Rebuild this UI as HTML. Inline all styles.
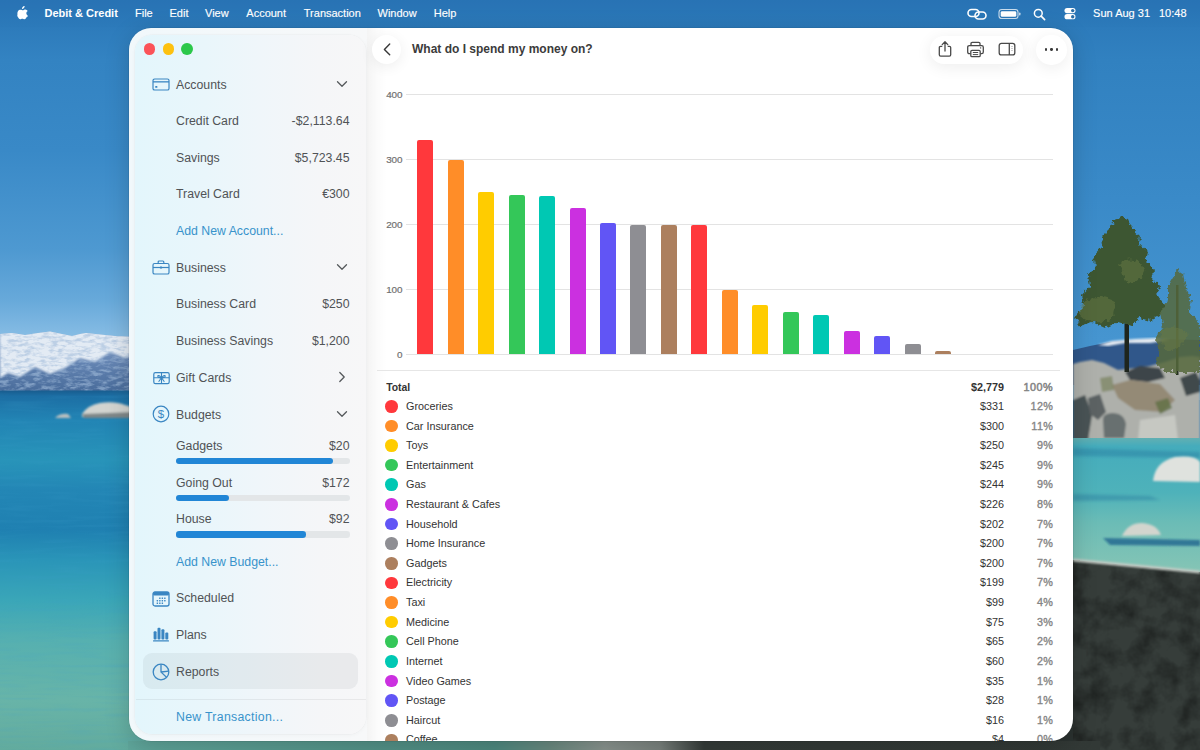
<!DOCTYPE html>
<html><head><meta charset="utf-8">
<style>
*{margin:0;padding:0;box-sizing:border-box}
html,body{width:1200px;height:750px;overflow:hidden;background:#2a77b6}
body{position:relative;font-family:"Liberation Sans",sans-serif}
#bg{position:absolute;left:0;top:0;width:1200px;height:750px;overflow:hidden}
#bg .scene{position:absolute;left:0;top:0}
#menubar{position:absolute;left:0;top:0;width:1200px;height:27px;background:rgba(40,115,180,0.12)}
.t{position:absolute;white-space:nowrap}
#win{position:absolute;left:128.5px;top:28px;width:944.5px;height:713px;border-radius:22px;background:linear-gradient(90deg,#f1f8fb 0,#f4f8fa 120px,#f7f8f9 238px,#fff 238px);overflow:hidden;box-shadow:0 0 0 0.5px rgba(0,0,0,0.12),0 6px 24px rgba(0,0,0,0.18)}
#sidebar{position:absolute;left:6px;top:6.5px;width:231.5px;height:699.5px;border-radius:17px;background:linear-gradient(90deg,#e3f6fc 0%,#e9f6fb 30%,#f0f6fa 55%,#f5f6f8 80%,#f7f7f8 100%);box-shadow:0 0 0 0.5px rgba(0,0,0,0.03),0 1px 4px rgba(0,0,0,0.035)}
.tl{position:absolute;width:11.8px;height:11.8px;border-radius:50%}
</style></head><body>

<div id="bg">
  <svg class="scene" width="1200" height="750" viewBox="0 0 1200 750">
    <defs>
      <linearGradient id="sky" x1="0" y1="0" x2="0" y2="400" gradientUnits="userSpaceOnUse">
        <stop offset="0.0000" stop-color="#2873b4"/>
        <stop offset="0.0675" stop-color="#2d7bbb"/>
        <stop offset="0.1500" stop-color="#3383c2"/>
        <stop offset="0.3750" stop-color="#3989c7"/>
        <stop offset="0.6250" stop-color="#4e99d1"/>
        <stop offset="0.7500" stop-color="#67a9da"/>
        <stop offset="0.8400" stop-color="#86bce4"/>
        <stop offset="1.0000" stop-color="#8cc0e6"/>
      </linearGradient>
      <linearGradient id="skyR" x1="0" y1="0" x2="0" y2="400" gradientUnits="userSpaceOnUse">
        <stop offset="0" stop-color="#2873b4"/>
        <stop offset="0.0675" stop-color="#2d7bbb"/>
        <stop offset="0.15" stop-color="#3181c0"/>
        <stop offset="0.5" stop-color="#3a8ac8"/>
        <stop offset="0.85" stop-color="#4695d0"/>
        <stop offset="1" stop-color="#4a98d2"/>
      </linearGradient>
      <linearGradient id="lakeL" x1="0" y1="390" x2="0" y2="750" gradientUnits="userSpaceOnUse">
        <stop offset="0.0000" stop-color="#185a8c"/>
        <stop offset="0.0167" stop-color="#1c6ea4"/>
        <stop offset="0.0833" stop-color="#2284b4"/>
        <stop offset="0.1944" stop-color="#2894b9"/>
        <stop offset="0.2778" stop-color="#2386b5"/>
        <stop offset="0.3889" stop-color="#1f80b1"/>
        <stop offset="0.4722" stop-color="#2a95b8"/>
        <stop offset="0.5833" stop-color="#3aa6b8"/>
        <stop offset="0.6944" stop-color="#56b0b0"/>
        <stop offset="0.8611" stop-color="#68b4a8"/>
        <stop offset="1.0000" stop-color="#62ab9e"/>
      </linearGradient>
      <linearGradient id="mtnBase" x1="0" y1="330" x2="0" y2="391" gradientUnits="userSpaceOnUse">
        <stop offset="0" stop-color="#9fb8d8"/>
        <stop offset="0.5" stop-color="#6686b4"/>
        <stop offset="1" stop-color="#496c9b"/>
      </linearGradient>
      <linearGradient id="lakeR" x1="0" y1="0" x2="0" y2="1">
        <stop offset="0" stop-color="#62afb2"/>
        <stop offset="0.06" stop-color="#45acbc"/>
        <stop offset="0.4" stop-color="#4eb2ba"/>
        <stop offset="0.62" stop-color="#6bbcb6"/>
        <stop offset="1" stop-color="#86c5b5"/>
      </linearGradient>
      <filter id="grain" x="0" y="0" width="100%" height="100%">
        <feTurbulence type="fractalNoise" baseFrequency="0.045" numOctaves="4" seed="4"/>
        <feColorMatrix type="matrix" values="0 0 0 0 0  0 0 0 0 0  0 0 0 0 0  0 0 0 -2.4 1.45"/>
        <feComposite in2="SourceGraphic" operator="in"/>
      </filter>
      <filter id="streak" x="0" y="0" width="100%" height="100%">
        <feTurbulence type="fractalNoise" baseFrequency="0.02 0.25" numOctaves="2" seed="7"/>
        <feColorMatrix type="matrix" values="0 0 0 0 0.05  0 0 0 0 0.35  0 0 0 0 0.6  0 0 0 -2.2 1.2"/>
        <feComposite in2="SourceGraphic" operator="in"/>
      </filter>
      <linearGradient id="strip" x1="0" y1="0" x2="1100" y2="0" gradientUnits="userSpaceOnUse">
        <stop offset="0.12" stop-color="#5fa69b"/>
        <stop offset="0.45" stop-color="#4e8a80"/>
        <stop offset="0.5" stop-color="#6a8a80"/>
        <stop offset="0.55" stop-color="#8a948f"/>
        <stop offset="0.6" stop-color="#7a827e"/>
        <stop offset="0.64" stop-color="#353c39"/>
        <stop offset="1" stop-color="#323936"/>
      </linearGradient>
      <filter id="speck" x="0" y="0" width="100%" height="100%">
        <feTurbulence type="fractalNoise" baseFrequency="0.12 0.3" numOctaves="3" seed="11"/>
        <feColorMatrix type="matrix" values="0 0 0 0 0.36  0 0 0 0 0.50  0 0 0 0 0.70  0 0 0 -3.2 1.85"/>
        <feComposite in2="SourceGraphic" operator="in"/>
      </filter>
      <filter id="foliage" x="-10%" y="-10%" width="120%" height="120%">
        <feTurbulence type="fractalNoise" baseFrequency="0.25" numOctaves="2" seed="3" result="n"/>
        <feDisplacementMap in="SourceGraphic" in2="n" scale="7" xChannelSelector="R" yChannelSelector="G" result="d"/>
        <feGaussianBlur in="d" stdDeviation="0.5"/>
      </filter>
      <filter id="blur1"><feGaussianBlur stdDeviation="0.8"/></filter>
      <filter id="blur2"><feGaussianBlur stdDeviation="1.5"/></filter>
    </defs>
    <rect x="0" y="0" width="640" height="400" fill="url(#sky)"/>
    <rect x="640" y="0" width="560" height="400" fill="url(#skyR)"/>
    <!-- left mountains -->
    <clipPath id="mclip"><path d="M0 334 L12 333 L25 335 L38 333 L50 331.5 L62 334 L72 336 L80 334 L86 333 L100 334.5 L115 336 L135 337 L160 338 L160 391 L0 391 Z"/></clipPath>
    <g clip-path="url(#mclip)">
      <rect x="0" y="330" width="160" height="61" fill="url(#mtnBase)"/>
      <path d="M0 330 L160 330 L160 356 L140 354 L125 358 L110 352 L95 362 L80 358 L65 368 L50 374 L35 367 L20 377 L8 373 L0 378 Z" fill="#e3ebf4" filter="url(#blur1)"/>
      <rect x="0" y="330" width="160" height="61" fill="#5f82b0" filter="url(#speck)" opacity="0.6"/>
    </g>
    <!-- left lake -->
    <rect x="0" y="390.5" width="640" height="360" fill="url(#lakeL)"/>
    <rect x="0" y="390.5" width="640" height="360" fill="#000" filter="url(#streak)" opacity="0.18"/>
    <!-- left rocks -->
    <g filter="url(#blur1)">
      <path d="M82 414 Q88 405 100 403 Q115 401 125 405 L135 408 L135 417 L82 417 Z" fill="#d2d4d0"/>
      <path d="M82 414 L135 412 L135 418 L84 418 Z" fill="#7f8788"/>
      <path d="M55 418 Q60 413 68 414 L71 418 Z" fill="#b9bfbf"/>
    </g>

    <!-- right distant mountain -->
    <path d="M1073 350 L1090 346 L1110 342 L1135 340 L1160 339 L1200 340 L1200 385 L1073 385 Z" fill="#30578a"/>
    <path d="M1098 345 L1112 341 L1135 339 L1158 338 L1170 340 L1150 343 L1125 343 L1108 346 Z" fill="#e6edf4" filter="url(#blur1)"/>
    <!-- rocks shore -->
    <g filter="url(#blur1)">
      <path d="M1073 364 L1080 362 L1092 360 L1104 363 L1118 370 L1135 368 L1150 366 L1165 362 L1180 357 L1192 356 L1200 357 L1200 442 L1073 442 Z" fill="#aeb0ab"/>
      <path d="M1125 372 L1140 366 L1160 368 L1165 378 L1148 382 L1130 380 Z" fill="#3e4548"/>
      <path d="M1112 385 L1130 380 L1160 384 L1175 400 L1162 412 L1135 410 L1118 398 Z" fill="#948a76"/>
      <path d="M1073 400 L1085 395 L1092 415 L1088 440 L1073 440 Z" fill="#4a5254"/>
      <path d="M1088 398 L1100 394 L1106 412 L1098 420 L1090 414 Z" fill="#5b6264"/>
      <path d="M1103 420 Q1102 414 1112 413 Q1124 413 1126 424 L1124 438 L1104 438 Z" fill="#686f70"/>
      <path d="M1180 378 L1196 372 L1200 380 L1200 392 L1186 396 Z" fill="#40484b"/>
      <path d="M1155 402 L1168 398 L1172 408 L1160 414 Z" fill="#5f6e45" opacity="0.8"/>
      <path d="M1100 378 L1112 376 L1114 390 L1102 392 Z" fill="#6f7b52" opacity="0.6"/>
      <path d="M1140 420 L1175 415 L1178 440 L1138 440 Z" fill="#c6c8c2"/>
    </g>
    <!-- right lake -->
    <rect x="1073" y="438" width="127" height="136" fill="url(#lakeR)"/>
    <g filter="url(#blur2)" fill="#1f6d98" opacity="0.35">
      <path d="M1073 448 L1200 452 L1200 458 L1073 456 Z"/>
      <path d="M1073 494 L1150 496 L1160 500 L1073 501 Z"/>
    </g>
    <g filter="url(#blur1)">
      <path d="M1153 481 Q1155 462 1175 457 Q1195 455 1200 462 L1200 482 Z" fill="#dfe2de"/>
      <path d="M1103 538 L1200 540 L1200 546 L1110 545 Z" fill="#1d5f8c" opacity="0.75"/>
      <path d="M1122 536 Q1128 523 1142 523 Q1157 524 1161 535 Z" fill="#d3d5ce"/>
    </g>
    <!-- dark granite -->
    <rect x="640" y="560" width="440" height="190" fill="#2b3230"/>
    <path d="M1073 560 L1200 572 L1200 750 L1073 750 Z" fill="#363d3a"/>
    <path d="M1073 560 L1200 572 L1200 750 L1073 750 Z" fill="#151b18" filter="url(#grain)" opacity="0.38"/>
    <path d="M1073 558.5 L1200 570.5 L1200 573.5 L1073 561.5 Z" fill="#c3cac4" filter="url(#blur1)"/>
    <!-- trees -->
    <rect x="1124.5" y="290" width="4.5" height="82" fill="#1e251d"/>
    <rect x="1176" y="285" width="2.5" height="90" fill="#263020"/>
    <g fill="#3c5630" filter="url(#foliage)">
      <path d="M1122 217 L1128 219 L1133 230 L1140 236 L1139 244 L1148 252 L1146 260 L1155 270 L1151 277 L1160 287 L1157 296 L1165 306 L1160 316 L1150 321 L1140 318 L1131 326 L1118 322 L1105 328 L1092 322 L1079 326 L1076 316 L1084 306 L1081 296 L1090 286 L1088 276 L1096 266 L1094 256 L1103 246 L1102 236 L1110 228 L1114 220 Z"/>
    </g>
    <g fill="#56693e" opacity="0.85" filter="url(#foliage)">
      <path d="M1177 270 L1183 274 L1186 288 L1191 298 L1189 310 L1198 322 L1200 330 L1200 372 L1166 372 L1156 364 L1159 350 L1155 340 L1163 326 L1161 312 L1168 300 L1168 285 Z"/>
    </g>
    <g fill="#6a7a44" opacity="0.5" filter="url(#foliage)">
      <path d="M1080 305 Q1095 292 1112 300 Q1120 315 1105 322 Q1088 324 1080 315 Z"/>
      <path d="M1120 262 Q1135 255 1145 268 Q1140 285 1125 282 Z"/>
      <path d="M1160 330 Q1175 322 1188 335 Q1180 352 1165 350 Z"/>
    </g>
    <!-- bottom strip -->
    <rect x="128" y="741" width="972" height="9" fill="url(#strip)"/>
  </svg>
</div>
<div id="menubar"></div>
<svg style="position:absolute;left:16.8px;top:6.2px" width="11.4" height="13.4" viewBox="0 0 170 200"><path fill="#fff" d="M150.4 155.5c-2.8 6.5-6.1 12.4-9.9 17.9-5.2 7.5-9.5 12.6-12.8 15.5-5.1 4.7-10.6 7.1-16.5 7.3-4.2 0-9.3-1.2-15.2-3.6-5.9-2.4-11.4-3.6-16.4-3.6-5.2 0-10.9 1.2-16.9 3.6-6 2.4-10.9 3.7-14.6 3.8-5.6.2-11.2-2.2-16.8-7.4-3.6-3.1-8-8.4-13.4-16.1-5.7-8.1-10.4-17.4-14.1-28.1C7.8 133.3 5.8 122 5.8 111c0-12.6 2.7-23.4 8.2-32.5 4.3-7.3 10-13.1 17.2-17.4 7.2-4.3 14.9-6.5 23.3-6.6 4.6 0 10.6 1.4 18 4.2 7.4 2.8 12.2 4.2 14.3 4.2 1.6 0 6.9-1.7 15.9-5 8.5-3.1 15.7-4.3 21.6-3.8 16 1.3 28 7.6 36 19-14.3 8.7-21.4 20.8-21.2 36.4.1 12.2 4.6 22.3 13.2 30.3 3.9 3.7 8.3 6.6 13.2 8.6-1.1 3.1-2.2 6-3.4 8.8zM113.6 3.9c0 9.5-3.5 18.4-10.4 26.6-8.4 9.8-18.5 15.4-29.5 14.5-.1-1.1-.2-2.3-.2-3.6 0-9.1 4-18.9 11-26.9 3.5-4 8-7.3 13.4-9.9 5.4-2.6 10.5-4 15.3-4.3.1 1.2.2 2.4.2 3.6z"/></svg>
<div class="t" style="left:44.5px;top:6.89px;font-size:11px;line-height:13.2px;color:#fff;font-weight:700;">Debit &amp; Credit</div>
<div class="t" style="left:135px;top:6.89px;font-size:11px;line-height:13.2px;color:#fff;font-weight:400;-webkit-text-stroke:0.15px #fff;">File</div>
<div class="t" style="left:169.5px;top:6.89px;font-size:11px;line-height:13.2px;color:#fff;font-weight:400;-webkit-text-stroke:0.15px #fff;">Edit</div>
<div class="t" style="left:205px;top:6.89px;font-size:11px;line-height:13.2px;color:#fff;font-weight:400;-webkit-text-stroke:0.15px #fff;">View</div>
<div class="t" style="left:246.3px;top:6.89px;font-size:11px;line-height:13.2px;color:#fff;font-weight:400;-webkit-text-stroke:0.15px #fff;">Account</div>
<div class="t" style="left:303.8px;top:6.89px;font-size:11px;line-height:13.2px;color:#fff;font-weight:400;-webkit-text-stroke:0.15px #fff;">Transaction</div>
<div class="t" style="left:377.5px;top:6.89px;font-size:11px;line-height:13.2px;color:#fff;font-weight:400;-webkit-text-stroke:0.15px #fff;">Window</div>
<div class="t" style="left:433.8px;top:6.89px;font-size:11px;line-height:13.2px;color:#fff;font-weight:400;-webkit-text-stroke:0.15px #fff;">Help</div>
<div class="t" style="right:50px;top:6.89px;font-size:11px;line-height:13.2px;color:#fff;font-weight:400;-webkit-text-stroke:0.15px #fff;">Sun Aug 31</div>
<div class="t" style="right:13.5px;top:6.89px;font-size:11px;line-height:13.2px;color:#fff;font-weight:400;-webkit-text-stroke:0.15px #fff;">10:48</div>
<svg style="position:absolute;left:966px;top:7px" width="22" height="14" viewBox="0 0 22 14">
<g fill="none" stroke="#fff" stroke-width="1.6"><rect x="2" y="2.5" width="11" height="7" rx="3.5"/><rect x="9" y="5" width="11" height="7" rx="3.5"/></g></svg>
<svg style="position:absolute;left:998px;top:8px" width="24" height="12" viewBox="0 0 24 12">
<rect x="1" y="1.5" width="19" height="9" rx="2.8" fill="none" stroke="#fff" stroke-opacity="0.75" stroke-width="1.1"/>
<rect x="2.7" y="3.2" width="15.6" height="5.6" rx="1.4" fill="#fff"/><rect x="21" y="4.5" width="1.5" height="3" rx="0.7" fill="#fff" fill-opacity="0.7"/></svg>
<svg style="position:absolute;left:1033px;top:8px" width="13" height="13" viewBox="0 0 13 13">
<circle cx="5.3" cy="5.3" r="3.9" fill="none" stroke="#fff" stroke-width="1.5"/><path d="M8.2 8.2 L11.6 11.6" stroke="#fff" stroke-width="1.7" stroke-linecap="round"/></svg>
<svg style="position:absolute;left:1063px;top:7px" width="14" height="14" viewBox="0 0 14 14"><rect x="1.5" y="1" width="11" height="5.2" rx="2.6" fill="#fff"/><rect x="1.5" y="7.1" width="11" height="5.2" rx="2.6" fill="#fff"/><circle cx="9.7" cy="3.6" r="1.7" fill="#2a6da5"/><circle cx="9.7" cy="9.7" r="1.7" fill="#2a6da5"/></svg>
<div id="win">
<div id="sidebar"></div>
</div>
<div class="tl" style="left:143.7px;top:43.2px;background:#fb5359"></div>
<div class="tl" style="left:162.5px;top:43.2px;background:#fdc10f"></div>
<div class="tl" style="left:181.2px;top:43.2px;background:#2cc84a"></div>
<div style="position:absolute;left:143px;top:653.4px;width:215px;height:35.6px;border-radius:9px;background:rgba(125,132,140,0.105)"></div>
<div style="position:absolute;left:136px;top:699px;width:230px;height:1px;background:rgba(0,0,0,0.06)"></div>
<div class="t" style="left:176px;top:77.56px;font-size:12.3px;line-height:14.76px;color:#505356;font-weight:400;">Accounts</div>
<svg style="position:absolute;left:152px;top:78px" width="18" height="13" viewBox="0 0 18 13"><rect x="1" y="1" width="16" height="11" rx="1.6" fill="none" stroke="#3a86c2" stroke-width="1.2"/><rect x="1" y="3.2" width="16" height="1.3" fill="#3a86c2"/><rect x="3.2" y="8" width="2.2" height="1.8" rx="0.5" fill="#3a86c2"/></svg>
<svg style="position:absolute;left:335.5px;top:80.0px" width="12" height="8" viewBox="0 0 12 8"><path d="M1.5 1.8 L6 6.2 L10.5 1.8" fill="none" stroke="#55595c" stroke-width="1.3" stroke-linecap="round" stroke-linejoin="round"/></svg>
<div class="t" style="left:176px;top:113.56px;font-size:12.3px;line-height:14.76px;color:#505356;font-weight:400;">Credit Card</div>
<div class="t" style="right:850.5px;top:113.56px;font-size:12.3px;line-height:14.76px;color:#505356;font-weight:400;">-$2,113.64</div>
<div class="t" style="left:176px;top:150.86px;font-size:12.3px;line-height:14.76px;color:#505356;font-weight:400;">Savings</div>
<div class="t" style="right:850.5px;top:150.86px;font-size:12.3px;line-height:14.76px;color:#505356;font-weight:400;">$5,723.45</div>
<div class="t" style="left:176px;top:187.36px;font-size:12.3px;line-height:14.76px;color:#505356;font-weight:400;">Travel Card</div>
<div class="t" style="right:850.5px;top:187.36px;font-size:12.3px;line-height:14.76px;color:#505356;font-weight:400;">&euro;300</div>
<div class="t" style="left:176px;top:223.86px;font-size:12.3px;line-height:14.76px;color:#3893cb;font-weight:400;">Add New Account...</div>
<div class="t" style="left:176px;top:260.66px;font-size:12.3px;line-height:14.76px;color:#505356;font-weight:400;">Business</div>
<svg style="position:absolute;left:152px;top:260px" width="18" height="15" viewBox="0 0 18 15"><rect x="1" y="3.5" width="16" height="10.5" rx="1.6" fill="none" stroke="#3a86c2" stroke-width="1.2"/><path d="M6.2 3.5 V1.9 Q6.2 1 7.1 1 H10.9 Q11.8 1 11.8 1.9 V3.5" fill="none" stroke="#3a86c2" stroke-width="1.2"/><path d="M1 7.5 H17" stroke="#3a86c2" stroke-width="1.2"/><rect x="7.9" y="6.6" width="2.2" height="2" rx="0.4" fill="#3a86c2"/></svg>
<svg style="position:absolute;left:335.5px;top:263.1px" width="12" height="8" viewBox="0 0 12 8"><path d="M1.5 1.8 L6 6.2 L10.5 1.8" fill="none" stroke="#55595c" stroke-width="1.3" stroke-linecap="round" stroke-linejoin="round"/></svg>
<div class="t" style="left:176px;top:297.36px;font-size:12.3px;line-height:14.76px;color:#505356;font-weight:400;">Business Card</div>
<div class="t" style="right:850.5px;top:297.36px;font-size:12.3px;line-height:14.76px;color:#505356;font-weight:400;">$250</div>
<div class="t" style="left:176px;top:334.06px;font-size:12.3px;line-height:14.76px;color:#505356;font-weight:400;">Business Savings</div>
<div class="t" style="right:850.5px;top:334.06px;font-size:12.3px;line-height:14.76px;color:#505356;font-weight:400;">$1,200</div>
<div class="t" style="left:176px;top:370.86px;font-size:12.3px;line-height:14.76px;color:#505356;font-weight:400;">Gift Cards</div>
<svg style="position:absolute;left:152.6px;top:372px" width="17" height="13" viewBox="0 0 17 13"><rect x="0.8" y="0.7" width="15.4" height="11" rx="1.6" fill="none" stroke="#3a86c2" stroke-width="1.2"/><path d="M0.8 5.8 H16.2 M8.5 0.7 V11.7" stroke="#3a86c2" stroke-width="1.1"/><path d="M8.5 5.8 Q5 2.2 4.8 4.2 Q4.8 5.8 8.5 5.8 Q12 2.2 12.2 4.2 Q12.2 5.8 8.5 5.8 L5.6 9.8 M8.5 5.8 L11.4 9.8" fill="none" stroke="#3a86c2" stroke-width="1.1"/></svg>
<svg style="position:absolute;left:337.5px;top:371.3px" width="8" height="12" viewBox="0 0 8 12"><path d="M1.8 1.5 L6.2 6 L1.8 10.5" fill="none" stroke="#55595c" stroke-width="1.3" stroke-linecap="round" stroke-linejoin="round"/></svg>
<div class="t" style="left:176px;top:407.66px;font-size:12.3px;line-height:14.76px;color:#505356;font-weight:400;">Budgets</div>
<svg style="position:absolute;left:152px;top:405.2px" width="18" height="18" viewBox="0 0 18 18"><circle cx="9" cy="9" r="7.8" fill="none" stroke="#3a86c2" stroke-width="1.2"/><text x="9" y="13.2" text-anchor="middle" font-family="Liberation Sans" font-size="11.5" fill="#3a86c2">$</text></svg>
<svg style="position:absolute;left:335.5px;top:410.1px" width="12" height="8" viewBox="0 0 12 8"><path d="M1.5 1.8 L6 6.2 L10.5 1.8" fill="none" stroke="#55595c" stroke-width="1.3" stroke-linecap="round" stroke-linejoin="round"/></svg>
<div class="t" style="left:176px;top:438.86px;font-size:12.3px;line-height:14.76px;color:#505356;font-weight:400;">Gadgets</div>
<div class="t" style="right:850.5px;top:438.86px;font-size:12.3px;line-height:14.76px;color:#505356;font-weight:400;">$20</div>
<div style="position:absolute;left:175.8px;top:457.9px;width:174px;height:6.4px;border-radius:3.2px;background:#e3e6e8"></div>
<div style="position:absolute;left:175.8px;top:457.9px;width:157.2px;height:6.4px;border-radius:3.2px;background:#2186d6"></div>
<div class="t" style="left:176px;top:475.56px;font-size:12.3px;line-height:14.76px;color:#505356;font-weight:400;">Going Out</div>
<div class="t" style="right:850.5px;top:475.56px;font-size:12.3px;line-height:14.76px;color:#505356;font-weight:400;">$172</div>
<div style="position:absolute;left:175.8px;top:494.6px;width:174px;height:6.4px;border-radius:3.2px;background:#e3e6e8"></div>
<div style="position:absolute;left:175.8px;top:494.6px;width:53.7px;height:6.4px;border-radius:3.2px;background:#2186d6"></div>
<div class="t" style="left:176px;top:512.26px;font-size:12.3px;line-height:14.76px;color:#505356;font-weight:400;">House</div>
<div class="t" style="right:850.5px;top:512.26px;font-size:12.3px;line-height:14.76px;color:#505356;font-weight:400;">$92</div>
<div style="position:absolute;left:175.8px;top:531.3px;width:174px;height:6.4px;border-radius:3.2px;background:#e3e6e8"></div>
<div style="position:absolute;left:175.8px;top:531.3px;width:129.8px;height:6.4px;border-radius:3.2px;background:#2186d6"></div>
<div class="t" style="left:176px;top:554.86px;font-size:12.3px;line-height:14.76px;color:#3893cb;font-weight:400;">Add New Budget...</div>
<div class="t" style="left:176px;top:591.26px;font-size:12.3px;line-height:14.76px;color:#505356;font-weight:400;">Scheduled</div>
<svg style="position:absolute;left:152px;top:591px" width="18" height="16" viewBox="0 0 18 16"><rect x="1" y="1" width="16" height="14" rx="2" fill="none" stroke="#3a86c2" stroke-width="1.3"/><rect x="1" y="1" width="16" height="3.4" rx="1.5" fill="#3a86c2"/><rect x="7.1" y="6.4" width="1.5" height="1.5" rx="0.4" fill="#3a86c2"/><rect x="9.6" y="6.4" width="1.5" height="1.5" rx="0.4" fill="#3a86c2"/><rect x="12.1" y="6.4" width="1.5" height="1.5" rx="0.4" fill="#3a86c2"/><rect x="4.6" y="8.9" width="1.5" height="1.5" rx="0.4" fill="#3a86c2"/><rect x="7.1" y="8.9" width="1.5" height="1.5" rx="0.4" fill="#3a86c2"/><rect x="9.6" y="8.9" width="1.5" height="1.5" rx="0.4" fill="#3a86c2"/><rect x="12.1" y="8.9" width="1.5" height="1.5" rx="0.4" fill="#3a86c2"/><rect x="4.6" y="11.4" width="1.5" height="1.5" rx="0.4" fill="#3a86c2"/><rect x="7.1" y="11.4" width="1.5" height="1.5" rx="0.4" fill="#3a86c2"/><rect x="9.6" y="11.4" width="1.5" height="1.5" rx="0.4" fill="#3a86c2"/></svg>
<div class="t" style="left:176px;top:628.26px;font-size:12.3px;line-height:14.76px;color:#505356;font-weight:400;">Plans</div>
<svg style="position:absolute;left:152px;top:627px" width="18" height="15" viewBox="0 0 18 15"><g fill="#3a86c2"><rect x="1.6" y="4.2" width="3" height="8.2" rx="1"/><rect x="5.5" y="0.8" width="3" height="11.6" rx="1"/><rect x="9.4" y="2.2" width="3" height="10.2" rx="1"/><rect x="13.3" y="5.4" width="3" height="7" rx="1"/><rect x="1" y="13.3" width="16" height="1.2" rx="0.5"/></g></svg>
<div class="t" style="left:176px;top:664.86px;font-size:12.3px;line-height:14.76px;color:#505356;font-weight:400;">Reports</div>
<svg style="position:absolute;left:152px;top:663px" width="18" height="18" viewBox="0 0 18 18"><circle cx="9" cy="9" r="7.8" fill="none" stroke="#3a86c2" stroke-width="1.3"/><path d="M9 1.2 V9 L14.6 14.4 M9 9 L16.8 8.2" fill="none" stroke="#3a86c2" stroke-width="1.3"/></svg>
<div class="t" style="left:176px;top:709.76px;font-size:12.3px;line-height:14.76px;color:#3893cb;font-weight:400;letter-spacing:0.3px;">New Transaction...</div>
<div style="position:absolute;left:366.5px;top:28px;width:20px;height:713px;background:linear-gradient(90deg,rgba(0,0,0,0.045),rgba(0,0,0,0.015) 50%,rgba(0,0,0,0))"></div>
<div style="position:absolute;left:372px;top:35px;width:29px;height:29px;border-radius:50%;background:#fff;box-shadow:0 3px 14px rgba(0,0,0,0.07)"></div>
<svg style="position:absolute;left:380.6px;top:42px" width="12" height="15" viewBox="0 0 12 15"><path d="M8.7 2 L3.4 7.4 L8.7 12.8" fill="none" stroke="#383838" stroke-width="1.4" stroke-linecap="round" stroke-linejoin="round"/></svg>
<div class="t" style="left:412px;top:42.44px;font-size:12px;line-height:14.4px;color:#3b3b3b;font-weight:700;">What do I spend my money on?</div>
<div style="position:absolute;left:930px;top:35.8px;width:92.5px;height:28px;border-radius:14px;background:#fff;box-shadow:0 3px 16px rgba(0,0,0,0.075)"></div>
<div style="position:absolute;left:1036px;top:34.5px;width:30.5px;height:30.5px;border-radius:50%;background:#fff;box-shadow:0 3px 16px rgba(0,0,0,0.075)"></div>
<svg style="position:absolute;left:937px;top:40px" width="16" height="18" viewBox="0 0 16 18"><path d="M5.3 6.3 H3.6 Q2.3 6.3 2.3 7.6 V14.8 Q2.3 16.1 3.6 16.1 H12.4 Q13.7 16.1 13.7 14.8 V7.6 Q13.7 6.3 12.4 6.3 H10.7" fill="none" stroke="#4a4a4a" stroke-width="1.3"/><path d="M8 11 V2 M5.2 4.6 L8 1.8 L10.8 4.6" fill="none" stroke="#4a4a4a" stroke-width="1.3" stroke-linecap="round" stroke-linejoin="round"/></svg>
<svg style="position:absolute;left:966px;top:41px" width="19" height="17" viewBox="0 0 19 17"><path d="M5 4.5 V2.6 Q5 1.3 6.3 1.3 H12.7 Q14 1.3 14 2.6 V4.5" fill="none" stroke="#4a4a4a" stroke-width="1.3"/><path d="M4.6 12.6 H3.3 Q1.7 12.6 1.7 11 V6.2 Q1.7 4.6 3.3 4.6 H15.7 Q17.3 4.6 17.3 6.2 V11 Q17.3 12.6 15.7 12.6 H14.4" fill="none" stroke="#4a4a4a" stroke-width="1.3"/><rect x="4.8" y="9.3" width="9.4" height="6.4" rx="1.2" fill="none" stroke="#4a4a4a" stroke-width="1.3"/><path d="M6.8 11.5 H12.2 M6.8 13.6 H12.2" stroke="#4a4a4a" stroke-width="1"/><circle cx="14.6" cy="6.9" r="0.7" fill="#4a4a4a"/></svg>
<svg style="position:absolute;left:998px;top:42px" width="18" height="14" viewBox="0 0 18 14"><rect x="1.2" y="1.3" width="15.6" height="11.6" rx="2.2" fill="none" stroke="#4a4a4a" stroke-width="1.3"/><path d="M11.3 1.3 V12.9" stroke="#4a4a4a" stroke-width="1.3"/><path d="M14 4 V4.6 M14 6 V6.6 M14 8 V8.6" stroke="#4a4a4a" stroke-width="0.9"/></svg>
<div style="position:absolute;left:1045.05px;top:48.4px;width:2.3px;height:2.3px;border-radius:50%;background:#3a3a3a"></div>
<div style="position:absolute;left:1050.35px;top:48.4px;width:2.3px;height:2.3px;border-radius:50%;background:#3a3a3a"></div>
<div style="position:absolute;left:1055.6499999999999px;top:48.4px;width:2.3px;height:2.3px;border-radius:50%;background:#3a3a3a"></div>
<div style="position:absolute;left:406px;top:94.1px;width:647px;height:1px;background:#e3e3e3"></div>
<div class="t" style="right:797.4px;top:89.43px;font-size:9.9px;line-height:11.88px;color:#6f6f6f;font-weight:400;-webkit-text-stroke:0.2px #6f6f6f;">400</div>
<div style="position:absolute;left:406px;top:159.0px;width:647px;height:1px;background:#e3e3e3"></div>
<div class="t" style="right:797.4px;top:154.33px;font-size:9.9px;line-height:11.88px;color:#6f6f6f;font-weight:400;-webkit-text-stroke:0.2px #6f6f6f;">300</div>
<div style="position:absolute;left:406px;top:223.7px;width:647px;height:1px;background:#e3e3e3"></div>
<div class="t" style="right:797.4px;top:219.03px;font-size:9.9px;line-height:11.88px;color:#6f6f6f;font-weight:400;-webkit-text-stroke:0.2px #6f6f6f;">200</div>
<div style="position:absolute;left:406px;top:288.5px;width:647px;height:1px;background:#e3e3e3"></div>
<div class="t" style="right:797.4px;top:283.83px;font-size:9.9px;line-height:11.88px;color:#6f6f6f;font-weight:400;-webkit-text-stroke:0.2px #6f6f6f;">100</div>
<div style="position:absolute;left:406px;top:353.5px;width:647px;height:1px;background:#e3e3e3"></div>
<div class="t" style="right:797.4px;top:348.83px;font-size:9.9px;line-height:11.88px;color:#6f6f6f;font-weight:400;-webkit-text-stroke:0.2px #6f6f6f;">0</div>
<div style="position:absolute;left:417.20px;top:139.68px;width:16px;height:214.32px;border-radius:2px 2px 0 0;background:#ff383c"></div>
<div style="position:absolute;left:447.66px;top:159.75px;width:16px;height:194.25px;border-radius:2px 2px 0 0;background:#ff8d28"></div>
<div style="position:absolute;left:478.12px;top:192.12px;width:16px;height:161.88px;border-radius:2px 2px 0 0;background:#ffcc00"></div>
<div style="position:absolute;left:508.58px;top:195.36px;width:16px;height:158.64px;border-radius:2px 2px 0 0;background:#34c759"></div>
<div style="position:absolute;left:539.04px;top:196.01px;width:16px;height:157.99px;border-radius:2px 2px 0 0;background:#00c8b3"></div>
<div style="position:absolute;left:569.50px;top:207.67px;width:16px;height:146.33px;border-radius:2px 2px 0 0;background:#cb30e0"></div>
<div style="position:absolute;left:599.96px;top:223.21px;width:16px;height:130.79px;border-radius:2px 2px 0 0;background:#6155f5"></div>
<div style="position:absolute;left:630.42px;top:224.50px;width:16px;height:129.50px;border-radius:2px 2px 0 0;background:#8e8e93"></div>
<div style="position:absolute;left:660.88px;top:224.50px;width:16px;height:129.50px;border-radius:2px 2px 0 0;background:#ac7f5e"></div>
<div style="position:absolute;left:691.34px;top:225.15px;width:16px;height:128.85px;border-radius:2px 2px 0 0;background:#ff383c"></div>
<div style="position:absolute;left:721.80px;top:289.90px;width:16px;height:64.10px;border-radius:2px 2px 0 0;background:#ff8d28"></div>
<div style="position:absolute;left:752.26px;top:305.44px;width:16px;height:48.56px;border-radius:2px 2px 0 0;background:#ffcc00"></div>
<div style="position:absolute;left:782.72px;top:311.91px;width:16px;height:42.09px;border-radius:2px 2px 0 0;background:#34c759"></div>
<div style="position:absolute;left:813.18px;top:315.15px;width:16px;height:38.85px;border-radius:2px 2px 0 0;background:#00c8b3"></div>
<div style="position:absolute;left:843.64px;top:331.34px;width:16px;height:22.66px;border-radius:2px 2px 0 0;background:#cb30e0"></div>
<div style="position:absolute;left:874.10px;top:335.87px;width:16px;height:18.13px;border-radius:2px 2px 0 0;background:#6155f5"></div>
<div style="position:absolute;left:904.56px;top:343.64px;width:16px;height:10.36px;border-radius:2px 2px 0 0;background:#8e8e93"></div>
<div style="position:absolute;left:935.02px;top:351.41px;width:16px;height:2.59px;border-radius:2px 2px 0 0;background:#ac7f5e"></div>
<div style="position:absolute;left:377px;top:369.7px;width:683px;height:1px;background:#e6e6e6"></div>
<div class="t" style="left:386.2px;top:381.96px;font-size:10.4px;line-height:12.48px;color:#333;font-weight:700;">Total</div>
<div class="t" style="right:196px;top:380.53px;font-size:10.8px;line-height:12.96px;color:#333;font-weight:700;">$2,779</div>
<div class="t" style="right:146.79999999999995px;top:380.53px;font-size:10.8px;line-height:12.96px;color:#858585;font-weight:400;-webkit-text-stroke:0.5px #858585;letter-spacing:0.5px;">100%</div>
<div style="position:absolute;left:0;top:0;width:1200px;height:741px;overflow:hidden">
<div style="position:absolute;left:385.2px;top:400.00px;width:12.6px;height:12.6px;border-radius:50%;background:#ff383c"></div>
<div class="t" style="left:406px;top:399.88px;font-size:10.8px;line-height:12.96px;color:#333;font-weight:400;">Groceries</div>
<div class="t" style="right:196px;top:399.88px;font-size:10.8px;line-height:12.96px;color:#333;font-weight:400;">$331</div>
<div class="t" style="right:146.79999999999995px;top:399.88px;font-size:10.8px;line-height:12.96px;color:#858585;font-weight:400;-webkit-text-stroke:0.35px #858585;letter-spacing:0.35px;">12%</div>
<div style="position:absolute;left:385.2px;top:419.62px;width:12.6px;height:12.6px;border-radius:50%;background:#ff8d28"></div>
<div class="t" style="left:406px;top:419.50px;font-size:10.8px;line-height:12.96px;color:#333;font-weight:400;">Car Insurance</div>
<div class="t" style="right:196px;top:419.50px;font-size:10.8px;line-height:12.96px;color:#333;font-weight:400;">$300</div>
<div class="t" style="right:146.79999999999995px;top:419.50px;font-size:10.8px;line-height:12.96px;color:#858585;font-weight:400;-webkit-text-stroke:0.35px #858585;letter-spacing:0.35px;">11%</div>
<div style="position:absolute;left:385.2px;top:439.24px;width:12.6px;height:12.6px;border-radius:50%;background:#ffcc00"></div>
<div class="t" style="left:406px;top:439.12px;font-size:10.8px;line-height:12.96px;color:#333;font-weight:400;">Toys</div>
<div class="t" style="right:196px;top:439.12px;font-size:10.8px;line-height:12.96px;color:#333;font-weight:400;">$250</div>
<div class="t" style="right:146.79999999999995px;top:439.12px;font-size:10.8px;line-height:12.96px;color:#858585;font-weight:400;-webkit-text-stroke:0.35px #858585;letter-spacing:0.35px;">9%</div>
<div style="position:absolute;left:385.2px;top:458.86px;width:12.6px;height:12.6px;border-radius:50%;background:#34c759"></div>
<div class="t" style="left:406px;top:458.74px;font-size:10.8px;line-height:12.96px;color:#333;font-weight:400;">Entertainment</div>
<div class="t" style="right:196px;top:458.74px;font-size:10.8px;line-height:12.96px;color:#333;font-weight:400;">$245</div>
<div class="t" style="right:146.79999999999995px;top:458.74px;font-size:10.8px;line-height:12.96px;color:#858585;font-weight:400;-webkit-text-stroke:0.35px #858585;letter-spacing:0.35px;">9%</div>
<div style="position:absolute;left:385.2px;top:478.48px;width:12.6px;height:12.6px;border-radius:50%;background:#00c8b3"></div>
<div class="t" style="left:406px;top:478.36px;font-size:10.8px;line-height:12.96px;color:#333;font-weight:400;">Gas</div>
<div class="t" style="right:196px;top:478.36px;font-size:10.8px;line-height:12.96px;color:#333;font-weight:400;">$244</div>
<div class="t" style="right:146.79999999999995px;top:478.36px;font-size:10.8px;line-height:12.96px;color:#858585;font-weight:400;-webkit-text-stroke:0.35px #858585;letter-spacing:0.35px;">9%</div>
<div style="position:absolute;left:385.2px;top:498.10px;width:12.6px;height:12.6px;border-radius:50%;background:#cb30e0"></div>
<div class="t" style="left:406px;top:497.98px;font-size:10.8px;line-height:12.96px;color:#333;font-weight:400;">Restaurant &amp; Cafes</div>
<div class="t" style="right:196px;top:497.98px;font-size:10.8px;line-height:12.96px;color:#333;font-weight:400;">$226</div>
<div class="t" style="right:146.79999999999995px;top:497.98px;font-size:10.8px;line-height:12.96px;color:#858585;font-weight:400;-webkit-text-stroke:0.35px #858585;letter-spacing:0.35px;">8%</div>
<div style="position:absolute;left:385.2px;top:517.72px;width:12.6px;height:12.6px;border-radius:50%;background:#6155f5"></div>
<div class="t" style="left:406px;top:517.60px;font-size:10.8px;line-height:12.96px;color:#333;font-weight:400;">Household</div>
<div class="t" style="right:196px;top:517.60px;font-size:10.8px;line-height:12.96px;color:#333;font-weight:400;">$202</div>
<div class="t" style="right:146.79999999999995px;top:517.60px;font-size:10.8px;line-height:12.96px;color:#858585;font-weight:400;-webkit-text-stroke:0.35px #858585;letter-spacing:0.35px;">7%</div>
<div style="position:absolute;left:385.2px;top:537.34px;width:12.6px;height:12.6px;border-radius:50%;background:#8e8e93"></div>
<div class="t" style="left:406px;top:537.22px;font-size:10.8px;line-height:12.96px;color:#333;font-weight:400;">Home Insurance</div>
<div class="t" style="right:196px;top:537.22px;font-size:10.8px;line-height:12.96px;color:#333;font-weight:400;">$200</div>
<div class="t" style="right:146.79999999999995px;top:537.22px;font-size:10.8px;line-height:12.96px;color:#858585;font-weight:400;-webkit-text-stroke:0.35px #858585;letter-spacing:0.35px;">7%</div>
<div style="position:absolute;left:385.2px;top:556.96px;width:12.6px;height:12.6px;border-radius:50%;background:#ac7f5e"></div>
<div class="t" style="left:406px;top:556.84px;font-size:10.8px;line-height:12.96px;color:#333;font-weight:400;">Gadgets</div>
<div class="t" style="right:196px;top:556.84px;font-size:10.8px;line-height:12.96px;color:#333;font-weight:400;">$200</div>
<div class="t" style="right:146.79999999999995px;top:556.84px;font-size:10.8px;line-height:12.96px;color:#858585;font-weight:400;-webkit-text-stroke:0.35px #858585;letter-spacing:0.35px;">7%</div>
<div style="position:absolute;left:385.2px;top:576.58px;width:12.6px;height:12.6px;border-radius:50%;background:#ff383c"></div>
<div class="t" style="left:406px;top:576.46px;font-size:10.8px;line-height:12.96px;color:#333;font-weight:400;">Electricity</div>
<div class="t" style="right:196px;top:576.46px;font-size:10.8px;line-height:12.96px;color:#333;font-weight:400;">$199</div>
<div class="t" style="right:146.79999999999995px;top:576.46px;font-size:10.8px;line-height:12.96px;color:#858585;font-weight:400;-webkit-text-stroke:0.35px #858585;letter-spacing:0.35px;">7%</div>
<div style="position:absolute;left:385.2px;top:596.20px;width:12.6px;height:12.6px;border-radius:50%;background:#ff8d28"></div>
<div class="t" style="left:406px;top:596.08px;font-size:10.8px;line-height:12.96px;color:#333;font-weight:400;">Taxi</div>
<div class="t" style="right:196px;top:596.08px;font-size:10.8px;line-height:12.96px;color:#333;font-weight:400;">$99</div>
<div class="t" style="right:146.79999999999995px;top:596.08px;font-size:10.8px;line-height:12.96px;color:#858585;font-weight:400;-webkit-text-stroke:0.35px #858585;letter-spacing:0.35px;">4%</div>
<div style="position:absolute;left:385.2px;top:615.82px;width:12.6px;height:12.6px;border-radius:50%;background:#ffcc00"></div>
<div class="t" style="left:406px;top:615.70px;font-size:10.8px;line-height:12.96px;color:#333;font-weight:400;">Medicine</div>
<div class="t" style="right:196px;top:615.70px;font-size:10.8px;line-height:12.96px;color:#333;font-weight:400;">$75</div>
<div class="t" style="right:146.79999999999995px;top:615.70px;font-size:10.8px;line-height:12.96px;color:#858585;font-weight:400;-webkit-text-stroke:0.35px #858585;letter-spacing:0.35px;">3%</div>
<div style="position:absolute;left:385.2px;top:635.44px;width:12.6px;height:12.6px;border-radius:50%;background:#34c759"></div>
<div class="t" style="left:406px;top:635.32px;font-size:10.8px;line-height:12.96px;color:#333;font-weight:400;">Cell Phone</div>
<div class="t" style="right:196px;top:635.32px;font-size:10.8px;line-height:12.96px;color:#333;font-weight:400;">$65</div>
<div class="t" style="right:146.79999999999995px;top:635.32px;font-size:10.8px;line-height:12.96px;color:#858585;font-weight:400;-webkit-text-stroke:0.35px #858585;letter-spacing:0.35px;">2%</div>
<div style="position:absolute;left:385.2px;top:655.06px;width:12.6px;height:12.6px;border-radius:50%;background:#00c8b3"></div>
<div class="t" style="left:406px;top:654.94px;font-size:10.8px;line-height:12.96px;color:#333;font-weight:400;">Internet</div>
<div class="t" style="right:196px;top:654.94px;font-size:10.8px;line-height:12.96px;color:#333;font-weight:400;">$60</div>
<div class="t" style="right:146.79999999999995px;top:654.94px;font-size:10.8px;line-height:12.96px;color:#858585;font-weight:400;-webkit-text-stroke:0.35px #858585;letter-spacing:0.35px;">2%</div>
<div style="position:absolute;left:385.2px;top:674.68px;width:12.6px;height:12.6px;border-radius:50%;background:#cb30e0"></div>
<div class="t" style="left:406px;top:674.56px;font-size:10.8px;line-height:12.96px;color:#333;font-weight:400;">Video Games</div>
<div class="t" style="right:196px;top:674.56px;font-size:10.8px;line-height:12.96px;color:#333;font-weight:400;">$35</div>
<div class="t" style="right:146.79999999999995px;top:674.56px;font-size:10.8px;line-height:12.96px;color:#858585;font-weight:400;-webkit-text-stroke:0.35px #858585;letter-spacing:0.35px;">1%</div>
<div style="position:absolute;left:385.2px;top:694.30px;width:12.6px;height:12.6px;border-radius:50%;background:#6155f5"></div>
<div class="t" style="left:406px;top:694.18px;font-size:10.8px;line-height:12.96px;color:#333;font-weight:400;">Postage</div>
<div class="t" style="right:196px;top:694.18px;font-size:10.8px;line-height:12.96px;color:#333;font-weight:400;">$28</div>
<div class="t" style="right:146.79999999999995px;top:694.18px;font-size:10.8px;line-height:12.96px;color:#858585;font-weight:400;-webkit-text-stroke:0.35px #858585;letter-spacing:0.35px;">1%</div>
<div style="position:absolute;left:385.2px;top:713.92px;width:12.6px;height:12.6px;border-radius:50%;background:#8e8e93"></div>
<div class="t" style="left:406px;top:713.80px;font-size:10.8px;line-height:12.96px;color:#333;font-weight:400;">Haircut</div>
<div class="t" style="right:196px;top:713.80px;font-size:10.8px;line-height:12.96px;color:#333;font-weight:400;">$16</div>
<div class="t" style="right:146.79999999999995px;top:713.80px;font-size:10.8px;line-height:12.96px;color:#858585;font-weight:400;-webkit-text-stroke:0.35px #858585;letter-spacing:0.35px;">1%</div>
<div style="position:absolute;left:385.2px;top:733.54px;width:12.6px;height:12.6px;border-radius:50%;background:#ac7f5e"></div>
<div class="t" style="left:406px;top:733.42px;font-size:10.8px;line-height:12.96px;color:#333;font-weight:400;">Coffee</div>
<div class="t" style="right:196px;top:733.42px;font-size:10.8px;line-height:12.96px;color:#333;font-weight:400;">$4</div>
<div class="t" style="right:146.79999999999995px;top:733.42px;font-size:10.8px;line-height:12.96px;color:#858585;font-weight:400;-webkit-text-stroke:0.35px #858585;letter-spacing:0.35px;">0%</div>
</div>
</body></html>
